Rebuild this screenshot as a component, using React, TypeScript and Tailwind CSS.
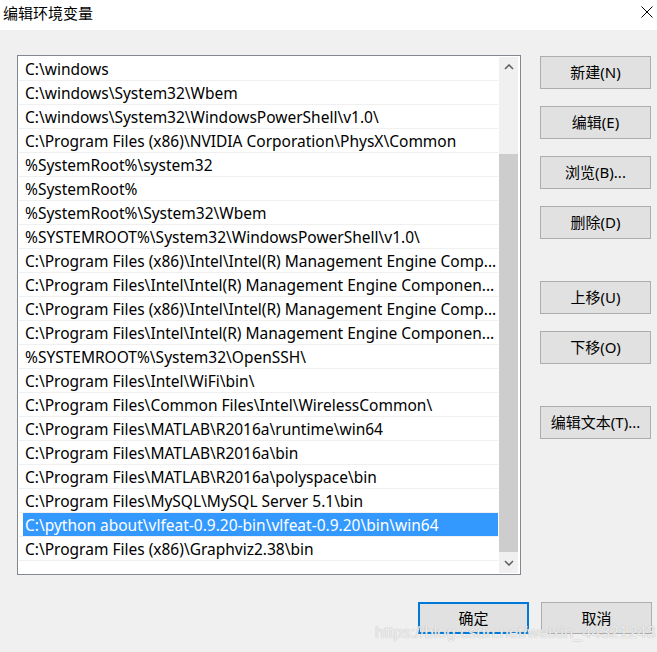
import React from "react";

const paths = [
  "C:\\windows",
  "C:\\windows\\System32\\Wbem",
  "C:\\windows\\System32\\WindowsPowerShell\\v1.0\\",
  "C:\\Program Files (x86)\\NVIDIA Corporation\\PhysX\\Common",
  "%SystemRoot%\\system32",
  "%SystemRoot%",
  "%SystemRoot%\\System32\\Wbem",
  "%SYSTEMROOT%\\System32\\WindowsPowerShell\\v1.0\\",
  "C:\\Program Files (x86)\\Intel\\Intel(R) Management Engine Comp...",
  "C:\\Program Files\\Intel\\Intel(R) Management Engine Componen...",
  "C:\\Program Files (x86)\\Intel\\Intel(R) Management Engine Comp...",
  "C:\\Program Files\\Intel\\Intel(R) Management Engine Componen...",
  "%SYSTEMROOT%\\System32\\OpenSSH\\",
  "C:\\Program Files\\Intel\\WiFi\\bin\\",
  "C:\\Program Files\\Common Files\\Intel\\WirelessCommon\\",
  "C:\\Program Files\\MATLAB\\R2016a\\runtime\\win64",
  "C:\\Program Files\\MATLAB\\R2016a\\bin",
  "C:\\Program Files\\MATLAB\\R2016a\\polyspace\\bin",
  "C:\\Program Files\\MySQL\\MySQL Server 5.1\\bin",
  "C:\\python about\\vlfeat-0.9.20-bin\\vlfeat-0.9.20\\bin\\win64",
  "C:\\Program Files (x86)\\Graphviz2.38\\bin",
];

const selectedIndex = 19;

function PathRow({ text, selected }: { text: string; selected: boolean }) {
  return (
    <div className="flex h-[24px] border-b border-[#f0f0f0]">
      <div
        className={
          selected
            ? "ml-[4px] flex flex-1 items-center overflow-hidden whitespace-nowrap bg-[#3399ff] pl-[2px] pt-[2px] text-white"
            : "ml-[4px] flex flex-1 items-center overflow-hidden whitespace-nowrap pl-[2px] pt-[2px]"
        }
      >
        {text}
      </div>
    </div>
  );
}

function Chevron({ up }: { up: boolean }) {
  return (
    <svg width="10" height="6" viewBox="0 0 10 6" className="text-[#606060]">
      <path
        d={up ? "M1 5 L5 1 L9 5" : "M1 1 L5 5 L9 1"}
        fill="none"
        stroke="currentColor"
        strokeWidth="1.6"
      />
    </svg>
  );
}

function DialogButton({
  label,
  isDefault = false,
  className = "",
}: {
  label: string;
  isDefault?: boolean;
  className?: string;
}) {
  const border = isDefault ? "border-2 border-[#0078d7]" : "border border-[#adadad]";
  return (
    <button
      className={`flex w-[111px] items-center justify-center bg-[#e1e1e1] text-black ${border} ${className}`}
    >
      {label}
    </button>
  );
}

export default function App() {
  return (
    <div className="relative h-[652px] w-[657px] overflow-hidden bg-[#f0f0f0] font-['Noto_Sans','Noto_Sans_CJK_SC',sans-serif] text-[15px] leading-none text-black">
      <div className="flex h-[30px] items-start justify-between bg-white pl-[3px] pr-[4px] pt-[5px]">
        <span className="leading-[16px]">编辑环境变量</span>
        <svg width="12" height="12" viewBox="0 0 12 12" className="mt-px">
          <path d="M0.5 0.5 L11.5 11.5 M11.5 0.5 L0.5 11.5" stroke="#000" strokeWidth="1" />
        </svg>
      </div>

      <div className="flex">
        <div className="ml-[17px] mt-[25px] flex h-[520px] w-[504px] border border-[#828790] bg-white">
          <div className="w-[480px] pl-px pt-px text-[15.5px]">
            {paths.map((p, i) => (
              <PathRow key={i} text={p} selected={i === selectedIndex} />
            ))}
          </div>
          <div className="ml-px my-px flex w-[19px] flex-col bg-[#f0f0f0]">
            <div className="flex h-[17px] items-center justify-center pt-[2px]">
              <Chevron up />
            </div>
            <div className="h-[80px]" />
            <div className="h-[398px] bg-[#cdcdcd]" />
            <div className="flex flex-1 items-center justify-center">
              <Chevron up={false} />
            </div>
          </div>
        </div>

        <div className="ml-[19px] mt-[26px] flex flex-col">
          <DialogButton label="新建(N)" className="h-[33px]" />
          <DialogButton label="编辑(E)" className="mt-[17px] h-[33px]" />
          <DialogButton label="浏览(B)..." className="mt-[17px] h-[33px]" />
          <DialogButton label="删除(D)" className="mt-[17px] h-[33px]" />
          <DialogButton label="上移(U)" className="mt-[42px] h-[33px]" />
          <DialogButton label="下移(O)" className="mt-[17px] h-[33px]" />
          <DialogButton label="编辑文本(T)..." className="mt-[42px] h-[33px]" />
        </div>
      </div>

      <div className="mr-[5px] mt-[27px] flex justify-end gap-[12px]">
        <DialogButton label="确定" isDefault className="h-[32px]" />
        <DialogButton label="取消" className="h-[32px]" />
      </div>

      <div className="pointer-events-none absolute left-[375px] top-[622px] whitespace-nowrap font-['Liberation_Sans',sans-serif] text-[16.5px] leading-[20px] text-white/80 [text-shadow:0_0_1px_#9a9a9a]">
        https://blog.csdn.net/weixin_44321243
      </div>
    </div>
  );
}
